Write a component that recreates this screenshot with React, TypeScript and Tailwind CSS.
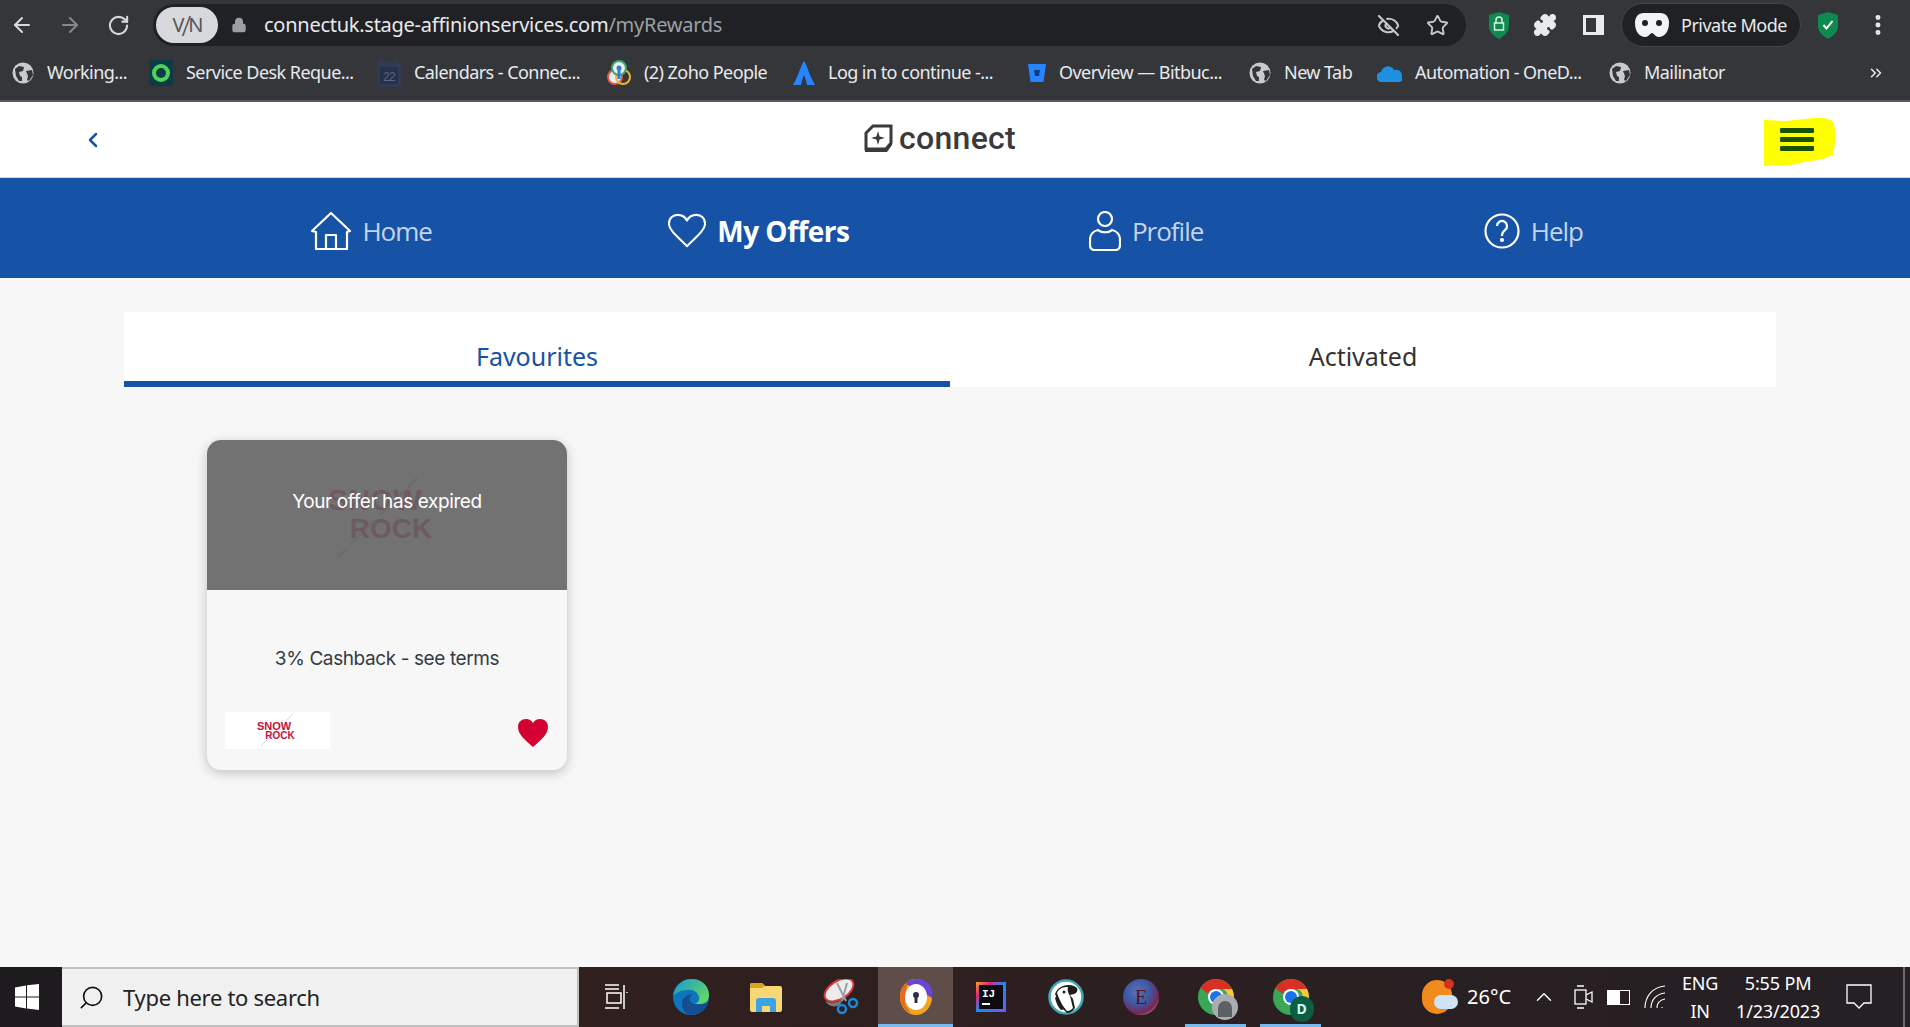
import { ArrowLeft, ArrowRight, RotateCw, Lock, Star, EyeOff, Puzzle, EllipsisVertical, ChevronsRight, ChevronLeft, ChevronUp, Search } from "lucide-react";

const Globe = () => (
	<svg width="22" height="22" viewBox="0 0 22 22" className="shrink-0">
		<circle cx="11" cy="11" r="10.5" fill="#c9cacc" />
		<path d="M3 7l4-3 5 1-1 4-4 1 1 4 2 1v4l-3 0-3-5zM14 9l6-1 1 5-4 6-2-1 1-4z" fill="#35363a" />
	</svg>
);

const bookmarks = [
	{
		label: "Working...",
		w: "w-[137px]",
		icon: <Globe />,
	},
	{
		label: "Service Desk Reque...",
		w: "w-[228px]",
		icon: (
			<svg width="24" height="26" viewBox="0 0 24 26" className="shrink-0">
				<rect width="24" height="26" rx="3" fill="#0d3b45" />
				<circle cx="12" cy="13" r="7" fill="none" stroke="#4ed35a" strokeWidth="4" />
			</svg>
		),
	},
	{
		label: "Calendars - Connec...",
		w: "w-[230px]",
		icon: (
			<svg width="24" height="28" viewBox="0 0 24 28" className="shrink-0">
				<rect y="3" width="24" height="25" rx="2" fill="#303a52" />
				<rect x="3" width="3" height="6" fill="#303a52" />
				<rect x="18" width="3" height="6" fill="#303a52" />
				<rect x="3" y="8" width="18" height="17" fill="#27314a" />
				<text x="12" y="22" textAnchor="middle" fontSize="12" fill="#56688c" fontFamily="'Liberation Sans', sans-serif">22</text>
			</svg>
		),
	},
	{
		label: "(2) Zoho People",
		w: "w-[186px]",
		icon: (
			<svg width="24" height="26" viewBox="0 0 24 26" className="shrink-0">
				<circle cx="8" cy="17" r="7" fill="#e9eef0" stroke="#e2574c" strokeWidth="2" />
				<circle cx="16" cy="17" r="7" fill="none" stroke="#f0b429" strokeWidth="2" />
				<circle cx="12" cy="8" r="7" fill="#e9eef0" stroke="#3aa76d" strokeWidth="2" />
				<circle cx="12" cy="8" r="2.5" fill="#2e7cd6" />
				<path d="M12 10v9" stroke="#2e7cd6" strokeWidth="3" />
			</svg>
		),
	},
	{
		label: "Log in to continue -...",
		w: "w-[234px]",
		icon: (
			<svg width="22" height="24" viewBox="0 0 22 24" className="shrink-0">
				<path d="M11 0c3 4 6 16 11 24h-8c-1-5-2-8-3-10-1 2-2 5-3 10H0C5 16 8 4 11 0z" fill="#2684ff" />
			</svg>
		),
	},
	{
		label: "Overview — Bitbuc...",
		w: "w-[222px]",
		icon: (
			<svg width="18" height="18" viewBox="0 0 18 18" className="ml-[1px] shrink-0">
				<path d="M0 0h18l-2.500 18h-13z" fill="#2684ff" />
				<path d="M6 6h6l-1 6H7z" fill="#0d3b85" />
			</svg>
		),
	},
	{
		label: "New Tab",
		w: "w-[128px]",
		icon: <Globe />,
	},
	{
		label: "Automation - OneD...",
		w: "w-[232px]",
		icon: (
			<svg width="25" height="18" viewBox="0 0 25 18" className="shrink-0">
				<path d="M5 18a5 5 0 0 1-1-10 7 7 0 0 1 13-2 6 6 0 0 1 8 6 4 4 0 0 1-2 6z" fill="#1f8fe0" />
			</svg>
		),
	},
	{
		label: "Mailinator",
		w: "w-[128px]",
		icon: <Globe />,
	},
];

const ChromeBar = () => (
	<div className="h-[102px] shrink-0 border-b-2 border-[#5b5b5f] bg-[#35363a] font-['Noto_Sans',sans-serif] text-[#e8eaed]">
		<div className="flex h-[50px] items-center pl-[10px] pr-[16px]">
			<ArrowLeft size={24} strokeWidth={2} className="text-[#d7d9dc]" />
			<ArrowRight size={24} strokeWidth={2} className="ml-[24px] text-[#85878a]" />
			<RotateCw size={23} strokeWidth={2.2} className="ml-[25px] text-[#d7d9dc]" />
			<div className="ml-[23px] flex h-[42px] w-[1313px] items-center rounded-full bg-[#202124] pl-[3px] pr-[17px]">
				<div className="flex h-[36px] w-[62px] items-center justify-center rounded-full bg-[#d8d9dc] text-[20px] leading-none tracking-[-2px] text-[#55565a]">
					<span>V</span>
					<span className="mx-[-1px] text-[28px] font-light">/</span>
					<span>N</span>
				</div>
				<Lock size={16} fill="#9aa0a6" className="ml-[13px] text-[#9aa0a6]" />
				<div className="ml-[17px] whitespace-nowrap text-[20px] tracking-[-0.26px]">
					connectuk.stage-affinionservices.com<span className="text-[#9aa0a6]">/myRewards</span>
				</div>
				<div className="ml-auto flex items-center gap-[26px] text-[#c4c7c5]">
					<EyeOff size={23} strokeWidth={2.2} />
					<Star size={23} strokeWidth={2} />
				</div>
			</div>
			<svg width="22" height="27" viewBox="0 0 22 27" className="ml-[22px]">
				<path d="M11 0l10 3v11c0 6-5 10-10 13C6 24 1 20 1 14V3z" fill="#0f8a4f" />
				<rect x="6.5" y="11" width="9" height="7" fill="none" stroke="#d9f3e4" strokeWidth="1.5" />
				<path d="M8 11V8a3 3 0 0 1 6 0v3" fill="none" stroke="#d9f3e4" strokeWidth="1.5" />
			</svg>
			<Puzzle size={24} fill="#e8eaed" className="ml-[23px] text-[#e8eaed]" />
			<div className="ml-[26px] flex h-[20px] w-[21px] justify-start border-[3px] border-[#e8eaed] bg-[#35363a]">
				<div className="ml-auto h-full w-[5px] bg-[#e8eaed]" />
			</div>
			<div className="ml-[17px] flex h-[44px] w-[180px] items-center gap-[12px] rounded-full border border-[#44454a] bg-[#202124] pl-[13px] text-[18px] tracking-[-0.5px]">
				<svg width="34" height="26" viewBox="0 0 34 26" className="shrink-0">
					<path d="M9 1h16c6 0 9 4 9 10 0 9-5 14-10 14-4 0-5-4-7-4s-3 4-7 4C5 25 0 20 0 11 0 5 3 1 9 1z" fill="#f1f3f4" />
					<circle cx="10" cy="11" r="3" fill="#202124" />
					<circle cx="24" cy="11" r="3" fill="#202124" />
				</svg>
				<span className="whitespace-nowrap">Private Mode</span>
			</div>
			<svg width="22" height="27" viewBox="0 0 22 27" className="ml-[16px]">
				<path d="M11 0l10 3v11c0 6-5 10-10 13C6 24 1 20 1 14V3z" fill="#0f8a4f" />
				<path d="M6.5 13l3 3.500 6-7.500" fill="none" stroke="#fff" strokeWidth="2" />
			</svg>
			<EllipsisVertical size={26} strokeWidth={2.6} className="ml-[26px] text-[#e8eaed]" />
		</div>
		<div className="flex h-[50px] items-center pb-[5px] pl-[12px] text-[18px] tracking-[-0.55px]">
			{bookmarks.map((b) => (
				<div key={b.label} className={`flex shrink-0 items-center gap-[13px] ${b.w}`}>
					{b.icon}
					<span className="whitespace-nowrap">{b.label}</span>
				</div>
			))}
			<ChevronsRight size={18} className="ml-auto mr-[25px] text-[#e8eaed]" />
		</div>
	</div>
);

const HomeIcon = () => (
	<svg width="40" height="38" viewBox="0 0 40 38" fill="none" stroke="#fff" strokeWidth="2.2" strokeLinejoin="round" className="shrink-0">
		<path d="M1 19L20 1l19 18-3 1v17H5V20z" />
		<path d="M15 37V23h10v14" />
	</svg>
);

const HeartIcon = () => (
	<svg width="38" height="36" viewBox="0 0 40 36" fill="none" stroke="#fff" strokeWidth="2.2" strokeLinejoin="round" className="shrink-0">
		<path d="M20 34C10 24 1 17 1 10 1 5 5 1 10 1c4 0 8 2 10 6 2-4 6-6 10-6 5 0 9 4 9 9 0 7-9 14-19 24z" />
	</svg>
);

const ProfileIcon = () => (
	<svg width="32" height="40" viewBox="0 0 32 40" fill="none" stroke="#fff" strokeWidth="2.2" className="shrink-0">
		<circle cx="16" cy="8" r="7" />
		<path d="M9 19c3 3 11 3 14 0 5 1 8 5 8 10v5c0 3-2 5-5 5H6c-3 0-5-2-5-5v-5c0-5 3-9 8-10z" />
	</svg>
);

const HelpIcon = () => (
	<svg width="36" height="36" viewBox="0 0 36 36" fill="none" stroke="#fff" strokeWidth="2.2" className="shrink-0">
		<circle cx="18" cy="18" r="16.5" />
		<path d="M13 13a5 5 0 1 1 8 4c-2 2-3 3-3 5v1" />
		<circle cx="18" cy="27" r="1" fill="#fff" />
	</svg>
);

const navItems = [
	{ label: "Home", icon: <HomeIcon />, active: false },
	{ label: "My Offers", icon: <HeartIcon />, active: true },
	{ label: "Profile", icon: <ProfileIcon />, active: false },
	{ label: "Help", icon: <HelpIcon />, active: false },
];

const Header = () => (
	<div className="relative flex h-[76px] shrink-0 items-center justify-center border-b border-[#d5d5d5] bg-white">
		<ChevronLeft size={24} strokeWidth={2.5} className="absolute left-[81px] top-[26px] text-[#1652a6]" />
		<div className="mb-[3px] mr-[30px] flex items-center gap-[6px]">
			<svg width="29" height="29" viewBox="0 0 29 29" className="shrink-0">
				<path d="M9 2h18v17l-5 6H2V9z" fill="none" stroke="#3a3a3a" strokeWidth="3" />
				<path d="M1 25h21l6-7v3l-5 7H1z" fill="#3a3a3a" />
				<path d="M14 7l1.600 5.400L21 14l-5.400 1.600L14 21l-1.600-5.400L7 14l5.400-1.600z" fill="#3a3a3a" />
			</svg>
			<span className="font-['Roboto',sans-serif] text-[32px] font-medium leading-none tracking-[0.3px] text-[#3a3a3a]">connect</span>
		</div>
		<svg width="72" height="50" viewBox="0 0 72 50" className="absolute left-[1764px] top-[15px]">
			<path d="M0 3l22 1 28-3c10 0 18 0 20 6 2 10 1 24-1 31l-10 4-18 3-15 3-26 1z" fill="#ffff00" />
		</svg>
		<div className="absolute left-[1780px] top-[26px] flex w-[34px] flex-col gap-[4px]">
			<div className="h-[5px] rounded-[1px] bg-[#1b5200]" />
			<div className="h-[5px] rounded-[1px] bg-[#1b5200]" />
			<div className="h-[5px] rounded-[1px] bg-[#1b5200]" />
		</div>
	</div>
);

const NavBar = () => (
	<div className="grid h-[100px] shrink-0 grid-cols-4 bg-[#1652a6] pl-[178px] pr-[183px] pt-[6px] font-['Open_Sans',sans-serif] text-[26px]">
		{navItems.map((item) => (
			<div key={item.label} className="flex items-center justify-center gap-[11px]">
				{item.icon}
				<span className={item.active ? "text-[28px] font-bold tracking-[-0.5px] text-white" : "tracking-[-1px] text-[#c5d4ec]"}>{item.label}</span>
			</div>
		))}
	</div>
);

const OfferCard = () => (
	<div className="ml-[207px] mt-[53px] h-[330px] w-[360px] overflow-hidden rounded-[14px] bg-[#f7f7f7] font-['Inter',sans-serif] shadow-[0_3px_12px_rgba(0,0,0,0.22)]">
		<div className="relative flex h-[150px] items-center justify-center bg-[#727272]">
			<div className="flex flex-col pb-[3px] font-['Liberation_Sans',sans-serif] text-[28px] font-bold leading-[29px] text-[#6e5b60]">
				<span className="mr-[24px] text-center text-[30px]">SNOW</span>
				<span className="ml-[8px] text-center">ROCK</span>
			</div>
			<svg width="90" height="90" viewBox="0 0 90 90" className="absolute left-[128px] top-[30px]">
				<path d="M2 88L88 2" stroke="#6b6b6b" strokeWidth="2" strokeDasharray="14 6" />
			</svg>
			<div className="absolute left-0 right-0 top-[47px] text-center text-[19px] leading-[30px] tracking-[-0.4px] text-white">
				Your offer has expired
			</div>
		</div>
		<div className="pt-[54px] text-center text-[19px] leading-[30px] tracking-[-0.4px] text-[#333b44]">
			3% Cashback - see terms
		</div>
		<div className="mt-[38px] flex items-start justify-between pl-[18px] pr-[19px]">
			<div className="relative flex h-[37px] w-[105px] items-center justify-center bg-white">
				<svg width="36" height="36" viewBox="0 0 36 36" className="absolute left-[34px] top-0">
					<path d="M2 34L34 2" stroke="#d8d8d8" strokeWidth="1" />
				</svg>
				<div className="relative flex flex-col font-['Liberation_Sans',sans-serif] text-[10px] font-bold leading-[10px] text-[#c8103e]">
					<span className="mr-[7px] text-center text-[11px]">SNOW</span>
					<span className="ml-[5px] text-center">ROCK</span>
				</div>
			</div>
			<svg width="30" height="28" viewBox="0 0 30 28" className="mt-[7px]">
				<path d="M15 28C6 20 0 15 0 8c0-5 3.500-8 8-8 3 0 5.500 1.500 7 4 1.500-2.500 4-4 7-4 4.500 0 8 3 8 8 0 7-6 12-15 20z" fill="#d30032" />
			</svg>
		</div>
	</div>
);

const Tabs = () => (
	<div className="ml-[124px] mr-[134px] mt-[34px] flex h-[75px] bg-white font-['Noto_Sans',sans-serif] text-[25px]">
		<div className="flex flex-1 items-center justify-center border-b-[6px] border-[#1652a6] pt-[20px] text-[#1652a6]">
			Favourites
		</div>
		<div className="flex flex-1 items-center justify-center pb-[6px] pt-[20px] text-[#333]">
			Activated
		</div>
	</div>
);

const Underline = ({ inset }: { inset?: boolean }) => (
	<div className={`absolute bottom-0 h-[3px] bg-[#76b9ed] ${inset ? "left-[7px] right-[7px]" : "left-0 right-0"}`} />
);

const taskIcons = [
	{
		key: "edge",
		icon: (
			<svg width="36" height="36" viewBox="0 0 36 36">
				<defs>
					<linearGradient id="edgeTop" x1="0" y1="0" x2="1" y2="0.6">
						<stop offset="0" stopColor="#1796d6" />
						<stop offset="1" stopColor="#5fd668" />
					</linearGradient>
				</defs>
				<circle cx="18" cy="18" r="18" fill="#0e76bd" />
				<path d="M0 17C2 6 10 0 19 0c10 0 17 7 17 16 0 5-3 9-8 9h-6c2-1 5-3 4-7-1-5-6-8-12-7-6 0-11 3-14 6z" fill="url(#edgeTop)" />
				<path d="M22 25h7c2 0 4-1 6-3-1 3-1 5-3 7-4 5-10 7-15 7-5-1-8-5-8-11 0-6 5-10 11-10-3 2-4 5-3 7 1 2 3 3 5 3z" fill="#134e93" />
			</svg>
		),
	},
	{
		key: "folder",
		icon: (
			<svg width="32" height="30" viewBox="0 0 32 30">
				<path d="M0 3a2 2 0 0 1 2-2h10l3 3h15a2 2 0 0 1 2 2v22a2 2 0 0 1-2 2H2a2 2 0 0 1-2-2z" fill="#f8d775" />
				<path d="M0 3a2 2 0 0 1 2-2h10l3 3-3 2H0z" fill="#dba21c" />
				<path d="M6 30V19a3 3 0 0 1 3-3h14a3 3 0 0 1 3 3v11h-6v-6h-8v6z" fill="#3ba3e6" />
			</svg>
		),
	},
	{
		key: "snip",
		icon: (
			<svg width="36" height="36" viewBox="0 0 36 36" fill="none">
				<ellipse cx="16" cy="11" rx="16" ry="9" transform="rotate(-32 16 11)" fill="#ececec" stroke="#d43a3a" strokeWidth="2" />
				<path d="M2 22c5 3 13 2 18-2l-3 6c-6 3-12 1-15-4z" fill="#7d7673" />
				<path d="M14 4l9 18M24 4l-5 18" stroke="#9aa0a6" strokeWidth="2" />
				<circle cx="19" cy="30" r="4" stroke="#1e88d8" strokeWidth="2.500" />
				<circle cx="30" cy="24" r="4" stroke="#1e88d8" strokeWidth="2.500" />
			</svg>
		),
	},
	{
		key: "avast",
		active: true,
		icon: (
			<svg width="34" height="36" viewBox="0 0 34 36">
				<ellipse cx="17" cy="18" rx="16" ry="18" fill="#f2a31f" />
				<path d="M6 5c6-7 20-7 26 3 2 4 2 8 1 11L17 9z" fill="#6a46d6" />
				<path d="M1 18C1 10 4 6 8 4L6 26l6 8C5 31 1 25 1 18z" fill="#e9681e" />
				<ellipse cx="17" cy="18" rx="11" ry="13" fill="#fff" />
				<circle cx="17" cy="16" r="3" fill="#2b2f4a" />
				<rect x="15.500" y="17" width="3" height="7" fill="#2b2f4a" />
			</svg>
		),
	},
	{
		key: "idea",
		icon: (
			<svg width="30" height="30" viewBox="0 0 30 30">
				<defs>
					<linearGradient id="ij" x1="0" y1="0" x2="1" y2="1">
						<stop offset="0" stopColor="#f5a623" />
						<stop offset="0.25" stopColor="#e0247f" />
						<stop offset="0.5" stopColor="#1c8cf0" />
						<stop offset="1" stopColor="#6b57ff" />
					</linearGradient>
				</defs>
				<rect width="30" height="30" fill="url(#ij)" />
				<rect x="3" y="3" width="24" height="24" fill="#0c0c10" />
				<text x="6" y="15" fontSize="11" fontWeight="700" fill="#fff" fontFamily="'Liberation Mono', monospace">IJ</text>
				<rect x="6" y="21" width="8" height="2" fill="#fff" />
			</svg>
		),
	},
	{
		key: "dbeaver",
		icon: (
			<svg width="36" height="36" viewBox="0 0 36 36">
				<circle cx="18" cy="18" r="16.500" fill="#fff" stroke="#3fa9b2" strokeWidth="2.500" />
				<path d="M7 15c2-6 8-9 14-9 3 0 6 1 8 3 1 2 0 5-3 6l-4 1 3 4 2 9c-2 3-5 5-8 5l-6-6c-2-4-4-8-6-13z" fill="#1d1d1d" />
				<path d="M9 14c2-5 6-6 11-6-1 3 0 6 2 9l3 12c-2 2-3 3-6 3-4-4-8-12-10-18z" fill="#fff" />
				<path d="M9 17c2 5 5 10 8 13l-4 1c-3-3-5-8-6-12z" fill="#1d1d1d" />
				<circle cx="16" cy="13" r="1.500" fill="#1d1d1d" />
			</svg>
		),
	},
	{
		key: "eclipse",
		icon: (
			<svg width="36" height="36" viewBox="0 0 36 36">
				<defs>
					<radialGradient id="ecl" cx="0.4" cy="0.35" r="0.75">
						<stop offset="0" stopColor="#5f6fb8" />
						<stop offset="0.45" stopColor="#3c5aa6" />
						<stop offset="0.8" stopColor="#7a2455" />
						<stop offset="1" stopColor="#b5808f" />
					</radialGradient>
				</defs>
				<circle cx="18" cy="18" r="18" fill="url(#ecl)" />
				<text x="18" y="25" textAnchor="middle" fontSize="20" fill="#5a1420" fontFamily="'Liberation Serif', serif">E</text>
			</svg>
		),
	},
];

const ChromeLogo = ({ badge }: { badge: React.ReactNode }) => (
	<div className="relative h-[36px] w-[36px]">
		<svg width="36" height="36" viewBox="0 0 36 36">
			<circle cx="18" cy="18" r="18" fill="#3aa757" />
			<path d="M2.500 9A18 18 0 0 1 34 10H18a8 8 0 0 0-8 5z" fill="#d93025" />
			<path d="M34 10a18 18 0 0 1-15 26l7-12a8 8 0 0 0-1-14z" fill="#fcc934" />
			<circle cx="18" cy="18" r="8" fill="#fff" />
			<circle cx="18" cy="18" r="6" fill="#1a73e8" />
		</svg>
		{badge}
	</div>
);

const Taskbar = () => (
	<div className="flex h-[60px] shrink-0 items-stretch bg-[linear-gradient(90deg,#33201e,#2e1f20_50%,#242024)] font-['Noto_Sans',sans-serif] text-white">
		<div className="flex w-[62px] items-center justify-center bg-[#1e1b1f] pr-[9px]">
			<svg width="24" height="26" viewBox="0 0 24 26" fill="#fff">
				<path d="M0 3.500l11-2v11H0zM12 1.200L24 0v12.500H12zM0 13.500h11v11l-11-2zM12 13.500h12V26l-12-1.500z" />
			</svg>
		</div>
		<div className="flex w-[517px] items-center border-2 border-l-0 border-[#c0c0c0] bg-[#f0f0f0] pl-[16px] text-[22px] tracking-[-0.3px] text-[#222]">
			<Search size={27} strokeWidth={1.5} className="-scale-x-100 text-[#111]" />
			<span className="ml-[18px] whitespace-nowrap">Type here to search</span>
		</div>
		<div className="flex w-[74px] items-center justify-center pl-[2px]">
			<svg width="26" height="26" viewBox="0 0 26 26" fill="none" stroke="#fff" strokeWidth="1.500">
				<path d="M1 1h14M1 5h14M3 9h14v10H3zM1 24h14M20 1v24M23 8v1" />
			</svg>
		</div>
		{taskIcons.map((t) => (
			<div key={t.key} className={`relative flex w-[75px] items-center justify-center ${t.active ? "bg-[#5f4d4a]" : ""}`}>
				{t.icon}
				{t.active ? <Underline /> : null}
			</div>
		))}
		<div className="relative flex w-[75px] items-center justify-center">
			<ChromeLogo
				badge={
					<div className="absolute bottom-[-5px] right-[-4px] flex h-[26px] w-[26px] items-end justify-center rounded-full bg-[#a9adb2]">
						<div className="mb-[3px] h-[16px] w-[14px] rounded-t-full bg-[#5c5f63]" />
					</div>
				}
			/>
			<Underline inset />
		</div>
		<div className="relative flex w-[75px] items-center justify-center">
			<ChromeLogo
				badge={
					<div className="absolute bottom-[-7px] right-[-5px] flex h-[26px] w-[24px] items-center justify-center rounded-full bg-[#0d5c46] text-[14px] font-bold leading-none text-[#ccffee]">
						D
					</div>
				}
			/>
			<Underline inset />
		</div>
		<div className="ml-[94px] flex items-center">
			<div className="relative h-[36px] w-[36px] shrink-0">
				<div className="absolute left-0 top-[1px] h-[34px] w-[30px] rounded-full bg-[#f28b1d]" />
				<div className="absolute right-[4px] top-0 h-[10px] w-[10px] rounded-full bg-[#d8301f]" />
				<div className="absolute bottom-[6px] right-0 h-[14px] w-[24px] rounded-full bg-[#cfe3f7]" />
			</div>
			<span className="ml-[9px] whitespace-nowrap text-[20px]">26°C</span>
		</div>
		<div className="ml-[20px] flex items-center">
			<ChevronUp size={26} strokeWidth={1.3} />
			<svg width="20" height="24" viewBox="0 0 20 24" fill="none" stroke="#fff" strokeWidth="1.300" className="ml-[17px]">
				<rect x="1" y="5" width="11" height="14" />
				<path d="M12 10l6-3v10l-6-3M3 1h7M3 23h7" />
			</svg>
			<div className="ml-[13px] flex h-[15px] w-[23px] border border-white">
				<div className="h-full w-[12px] bg-white" />
			</div>
			<svg width="22" height="24" viewBox="0 0 22 24" fill="none" stroke="#fff" strokeWidth="1.100" className="ml-[14px]">
				<path d="M1 23c0-12 8-21 20-22M7 23c0-8 5-14 14-15M13 23c0-5 3-8 8-9M18 22v1" />
			</svg>
		</div>
		<div className="ml-[16px] flex flex-col items-center justify-center gap-[3px] text-[18px] leading-[25px] tracking-[-0.3px]">
			<span>ENG</span>
			<span>IN</span>
		</div>
		<div className="ml-[18px] flex flex-col items-center justify-center gap-[3px] text-[18px] leading-[25px] tracking-[-0.15px]">
			<span>5:55 PM</span>
			<span>1/23/2023</span>
		</div>
		<div className="ml-[26px] flex items-center">
			<svg width="26" height="26" viewBox="0 0 26 26" fill="none" stroke="#fff" strokeWidth="1.300">
				<path d="M1 1h24v18h-7l-5 5-5-5H1z" />
			</svg>
		</div>
		<div className="ml-auto mr-[5px] w-[2px] bg-[#6f6a6c]" />
	</div>
);

export default function App() {
	return (
		<div className="flex h-[1027px] w-[1910px] flex-col overflow-hidden bg-[#f7f7f7]">
			<ChromeBar />
			<Header />
			<NavBar />
			<div className="flex-1">
				<Tabs />
				<OfferCard />
			</div>
			<Taskbar />
		</div>
	);
}
